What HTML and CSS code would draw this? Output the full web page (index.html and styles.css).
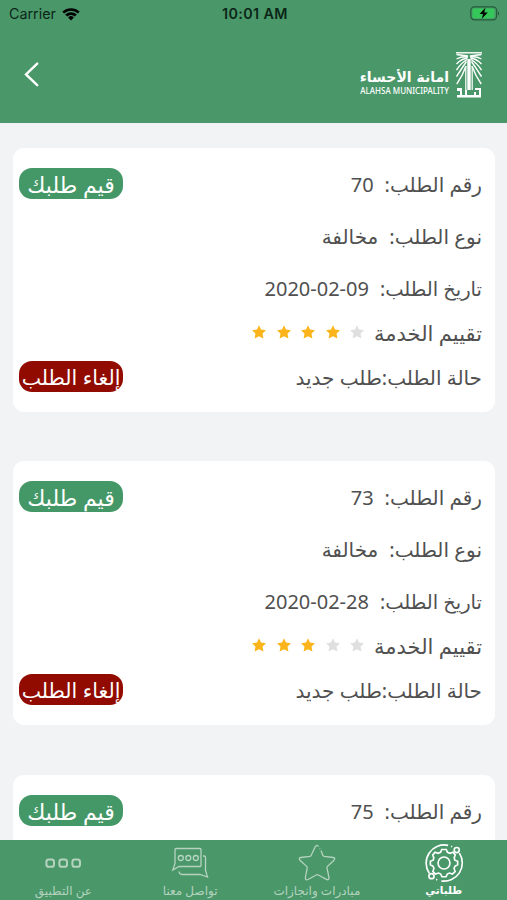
FILE: index.html
```html
<!DOCTYPE html>
<html lang="ar" dir="rtl">

<head>
  <meta charset="UTF-8" />
  <title>طلباتي</title>
  <link rel="stylesheet" href="styles.css">
</head>

<body>
  <!-- star shape used by every rating -->
  <svg class="defs" width="0" height="0">
    <symbol id="star" viewBox="0 0 14 14">
      <path d="M7 0.2 L9 4.6 L14 5.2 L10.5 8.6 L11.4 13.6 L7 11.2 L2.6 13.6 L3.5 8.6 L0 5.2 L5 4.6 Z" />
    </symbol>
  </svg>

  <!-- header -->
  <header class="header">
    <div class="status" dir="ltr">
      <div class="carrier">
        <span>Carrier</span>
        <svg width="18" height="14" viewBox="0 0 18 14">
          <path d="M0.3 4.7 A12.6 12.6 0 0 1 17.7 4.7 L15.8 6.6 A9.8 9.8 0 0 0 2.2 6.6 Z" />
          <path d="M3.2 7.6 A8.4 8.4 0 0 1 14.8 7.6 L12.9 9.5 A5.7 5.7 0 0 0 5.1 9.5 Z" />
          <path d="M6.1 10.5 A4.2 4.2 0 0 1 11.9 10.5 L9 13.5 Z" />
        </svg>
      </div>
      <span class="time">10:01 AM</span>
      <svg class="battery" width="31" height="15" viewBox="0 0 31 15">
        <rect x="0.8" y="0.8" width="25.8" height="13" rx="3.6" fill="none" stroke="#255c3b" stroke-width="1.2" />
        <rect x="2.4" y="2.4" width="22" height="9.8" rx="2" fill="#35c759" />
        <path d="M28 5 Q30.4 7.3 28 9.6 Z" fill="#255c3b" />
        <path d="M15.6 1.6 L9.6 8 H13 L11.8 12.8 L17.8 6.4 H14.2 Z" fill="#000" />
      </svg>
    </div>
    <div class="topbar">
      <div class="logo">
        <svg class="palm" width="26" height="46" viewBox="0 0 26 46">
          <g fill="none" stroke="#fff" stroke-width="1.4">
            <path d="M0 0.8 H26" />
            <path d="M12 4 L0.5 2.5 M12 5 Q6 4 0.5 7 M11.5 6 Q5 7 0.5 12 M11 7.5 Q5 11 0.5 18 M10.5 9.5 Q6 16 0.5 24.5 M10 14 Q7 23 0.8 32" />
            <path d="M14 4 L25.5 2.5 M14 5 Q20 4 25.5 7 M14.5 6 Q21 7 25.5 12 M15 7.5 Q21 11 25.5 18 M15.5 9.5 Q20 16 25.5 24.5 M16 14 Q19 23 25.2 32" />
            <path d="M13 7 V38" stroke-width="3.4" />
            <path d="M9.8 14 V42 M16.2 14 V38" stroke-width="1.2" />
          </g>
          <path d="M1 36 H6 V43 H9 V38 H11 V43 H18 V40 H20 V43 H23 V38 H19 V36 H25 V45.5 H1 V43 H4 V39 H1 Z" fill="#fff" />
        </svg>
        <div class="logo-text">
          <span class="logo-ar">امانة الأحساء</span>
          <span class="logo-en">ALAHSA MUNICIPALITY</span>
        </div>
      </div>
      <svg class="back" width="16" height="26" viewBox="0 0 16 26">
        <path d="M13.2 1.6 L2 12.4 L13.2 23.2" fill="none" stroke="#fff" stroke-width="2.4" stroke-linecap="round" />
      </svg>
    </div>
  </header>

  <!-- request list -->
  <main class="list">
    <section class="card">
      <div class="row">
        <span class="label">رقم الطلب:</span><span class="value">70</span>
        <a class="btn rate">قيم طلبك</a>
      </div>
      <div class="row">
        <span class="label">نوع الطلب:</span><span class="value">مخالفة</span>
      </div>
      <div class="row">
        <span class="label date">تاريخ الطلب:</span><span class="value" dir="ltr">2020-02-09</span>
      </div>
      <div class="row rating">
        <span class="label service">تقييم الخدمة</span>
        <div class="stars">
          <svg class="off"><use href="#star" /></svg>
          <svg><use href="#star" /></svg>
          <svg><use href="#star" /></svg>
          <svg><use href="#star" /></svg>
          <svg><use href="#star" /></svg>
        </div>
      </div>
      <div class="row state">
        <span class="label">حالة الطلب:طلب جديد</span>
        <a class="btn cancel">إلغاء الطلب</a>
      </div>
    </section>

    <section class="card">
      <div class="row">
        <span class="label">رقم الطلب:</span><span class="value">73</span>
        <a class="btn rate">قيم طلبك</a>
      </div>
      <div class="row">
        <span class="label">نوع الطلب:</span><span class="value">مخالفة</span>
      </div>
      <div class="row">
        <span class="label date">تاريخ الطلب:</span><span class="value" dir="ltr">2020-02-28</span>
      </div>
      <div class="row rating">
        <span class="label service">تقييم الخدمة</span>
        <div class="stars">
          <svg class="off"><use href="#star" /></svg>
          <svg class="off"><use href="#star" /></svg>
          <svg><use href="#star" /></svg>
          <svg><use href="#star" /></svg>
          <svg><use href="#star" /></svg>
        </div>
      </div>
      <div class="row state">
        <span class="label">حالة الطلب:طلب جديد</span>
        <a class="btn cancel">إلغاء الطلب</a>
      </div>
    </section>

    <section class="card">
      <div class="row">
        <span class="label">رقم الطلب:</span><span class="value">75</span>
        <a class="btn rate">قيم طلبك</a>
      </div>
    </section>
  </main>

  <!-- bottom tabs -->
  <nav class="tabs">
    <a class="tab on">
      <svg width="40" height="40" viewBox="0.5 0.5 39 39">
        <circle cx="20" cy="20" r="5.8" />
        <path d="M17.8 6.8 H22.2 L23.4 9.6 L25.8 10.6 L28.7 9.5 L31 12.2 L29.9 15 L30.6 17.2 L33.3 18.4 V21.8 L30.6 23.2 L29.8 25.3 L30.9 28.2 L28.2 30.8 L25.3 29.8 L23.2 30.8 L22 33.4 H18 L16.8 30.8 L14.7 29.8 L11.8 30.8 L9.1 28.2 L10.2 25.3 L9.4 23.2 L6.7 21.8 V18.4 L9.4 17.2 L10.1 15 L9 12.2 L11.3 9.5 L14.2 10.6 L16.6 9.6 Z" />
        <path d="M5.6 30 A17.7 17.7 0 0 1 24 2.8 M35 10.4 A17.7 17.7 0 0 1 17.4 37.5 M27 3.7 L28 4.1 M13.4 36.5 L12.3 35.9" />
        <circle cx="32.4" cy="7.4" r="2.5" />
        <circle cx="7.8" cy="32.8" r="2.5" />
      </svg>
      <span>طلباتي</span>
    </a>
    <a class="tab">
      <svg width="40" height="40" viewBox="0 0 40 40">
        <path d="M24 7.5 L25.8 12.2 Q26.2 13.2 27.3 13.4 L36.2 14.5 Q38.8 15 37 17.2 L30.5 23.4 Q29.8 24.2 30 25.2 L32 34.5 Q32.2 37.6 29.4 36.4 L21.3 32 Q20.2 31.4 19.2 32 L11 36.5 Q8 37.6 8.4 34.5 L10.2 25.2 Q10.4 24.2 9.6 23.4 L3 17.2 Q1.2 15 3.8 14.5 L12.8 13.4 Q13.8 13.2 14.2 12.2 L18.2 3.8 Q20 1 21.6 3.6 M22.7 5.3 L23 5.8" />
      </svg>
      <span>مبادرات وانجازات</span>
    </a>
    <a class="tab">
      <svg width="40" height="40" viewBox="0 0 40 40">
        <path d="M5 6.5 Q5 5.5 6 5.5 H30 Q31 5.5 31 6.5 V22.5 Q31 23.5 30 23.5 H9 L2.8 27 L5 20.5 Z M33 13 H34.2 Q35.5 13 35.5 14.5 V27.5 L37.5 34 L30 31.5 H12 Q9.5 31.5 9 28.5" />
        <circle cx="10.8" cy="15" r="2.5" />
        <circle cx="18.3" cy="15" r="2.5" />
        <circle cx="25.8" cy="15" r="2.5" />
      </svg>
      <span>تواصل معنا</span>
    </a>
    <a class="tab">
      <svg class="dots" width="40" height="40" viewBox="0 0 40 40">
        <rect x="3.4" y="16.6" width="7.6" height="7.2" rx="2.4" />
        <rect x="16.4" y="16.6" width="7.6" height="7.2" rx="2.4" />
        <rect x="29.4" y="16.6" width="7.6" height="7.2" rx="2.4" />
      </svg>
      <span>عن التطبيق</span>
    </a>
  </nav>
</body>

</html>
```
FILE: styles.css
```css
html,
body {
  margin: 0;
  padding: 0;
}

body {
  display: flex;
  flex-direction: column;
  height: 900px;
  overflow: hidden;
  background-color: #f2f3f5;
  color: #505050;
  font-family: "Noto Sans", "DejaVu Sans", sans-serif;
}

.defs {
  display: block;
}

/* header */
.header {
  flex: none;
  height: 123px;
  background-color: #4a986a;
}

.status {
  display: grid;
  grid-template-columns: 1fr auto 1fr;
  align-items: center;
  height: 27px;
  padding: 0 6px 0 9px;
  color: #0b2616;
  font-family: Inter, sans-serif;
  font-size: 14.3px;
}

.carrier {
  display: flex;
  align-items: center;
  gap: 6px;
}

.carrier svg {
  fill: #000;
}

.time {
  font-weight: 600;
  letter-spacing: 0.4px;
}

.battery {
  justify-self: end;
}

.topbar {
  display: flex;
  justify-content: space-between;
  align-items: center;
  height: 95px;
  padding: 0 25px 0 24px;
}

.logo {
  display: flex;
  align-items: center;
  gap: 7px;
  color: #fff;
}

.logo-text {
  display: flex;
  flex-direction: column;
  padding-top: 12px;
}

.logo-ar {
  font-family: "DejaVu Sans", sans-serif;
  font-size: 14px;
  font-weight: bold;
  line-height: 20px;
}

.logo-en {
  font-size: 8px;
  font-weight: 500;
  line-height: 7px;
}

/* cards */
.list {
  flex: 1;
  display: flex;
  flex-direction: column;
  gap: 49.4px;
  min-height: 0;
  overflow: hidden;
  padding: 25px 12px 0 13px;
}

.card {
  flex: none;
  box-sizing: border-box;
  height: 264px;
  padding: 10px 13px 0 6px;
  background-color: #fff;
  border-radius: 11px;
}

.row {
  display: flex;
  align-items: center;
  height: 52px;
  font-size: 20px;
  line-height: 30px;
  white-space: nowrap;
}

.rating {
  height: 36px;
}

.state {
  height: 54px;
}

.label,
.value {
  padding-top: 2px;
}

.value {
  margin-right: 11px;
}

.date {
  font-size: 19.5px;
}

.service {
  font-size: 21px;
}

.stars {
  display: flex;
  gap: 10.5px;
  margin-right: 10px;
}

.stars svg {
  width: 14px;
  height: 14px;
  fill: #fbb41a;
}

.stars .off {
  fill: #dfdfdf;
}

/* text sits a little low in the pill */
.btn {
  display: flex;
  justify-content: center;
  box-sizing: border-box;
  width: 104px;
  height: 31px;
  margin: 0 auto 1px 0;
  padding-top: 1px;
  border-radius: 13px;
  color: #fff;
}

.rate {
  background-color: #449766;
  font-size: 22px;
}

.cancel {
  background-color: #910b00;
  font-size: 20.5px;
}

/* tabs */
.tabs {
  flex: none;
  display: grid;
  grid-template-columns: repeat(4, 1fr);
  height: 60px;
  background-color: #4a986a;
}

.tab {
  display: flex;
  flex-direction: column;
  align-items: center;
  padding-top: 3px;
  color: #b5d3bf;
  font-size: 12px;
  line-height: 15px;
}

.tab svg {
  fill: none;
  stroke: #b5d3bf;
  stroke-width: 1.3;
}

.tab .dots {
  stroke-width: 2;
}

.on {
  color: #fff;
  font-size: 10.5px;
  font-weight: bold;
}

.on svg {
  stroke: #fff;
  stroke-width: 1.6;
}
```
